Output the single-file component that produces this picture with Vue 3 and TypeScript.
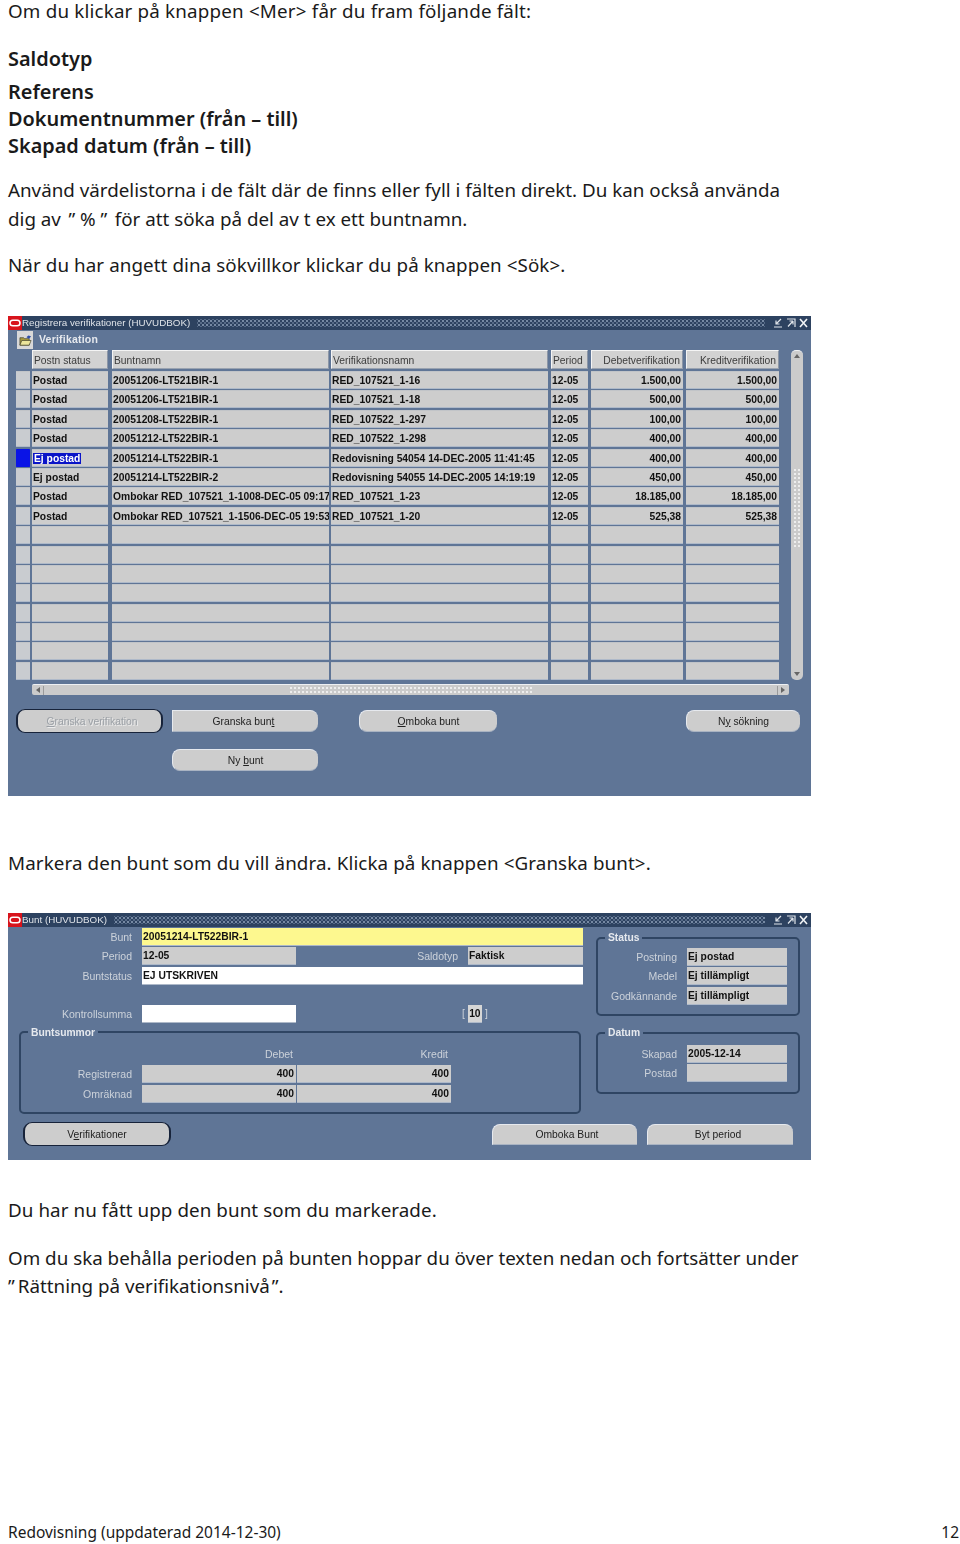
<script setup lang="ts">
type Row = {
  status: string
  batch: string
  name: string
  period: string
  debit: string
  credit: string
  active?: boolean
}

const rows: Row[] = [
  { status: 'Postad', batch: '20051206-LT521BIR-1', name: 'RED_107521_1-16', period: '12-05', debit: '1.500,00', credit: '1.500,00' },
  { status: 'Postad', batch: '20051206-LT521BIR-1', name: 'RED_107521_1-18', period: '12-05', debit: '500,00', credit: '500,00' },
  { status: 'Postad', batch: '20051208-LT522BIR-1', name: 'RED_107522_1-297', period: '12-05', debit: '100,00', credit: '100,00' },
  { status: 'Postad', batch: '20051212-LT522BIR-1', name: 'RED_107522_1-298', period: '12-05', debit: '400,00', credit: '400,00' },
  { status: 'Ej postad', batch: '20051214-LT522BIR-1', name: 'Redovisning 54054 14-DEC-2005 11:41:45', period: '12-05', debit: '400,00', credit: '400,00', active: true },
  { status: 'Ej postad', batch: '20051214-LT522BIR-2', name: 'Redovisning 54055 14-DEC-2005 14:19:19', period: '12-05', debit: '450,00', credit: '450,00' },
  { status: 'Postad', batch: 'Ombokar RED_107521_1-1008-DEC-05 09:17', name: 'RED_107521_1-23', period: '12-05', debit: '18.185,00', credit: '18.185,00' },
  { status: 'Postad', batch: 'Ombokar RED_107521_1-1506-DEC-05 19:53', name: 'RED_107521_1-20', period: '12-05', debit: '525,38', credit: '525,38' },
]
const emptyRows = 8
</script>

<template>
  <main class="page">
    <p class="line first">Om du klickar på knappen &lt;Mer&gt; får du fram följande fält:</p>
    <p class="line strong mt-saldo">Saldotyp</p>
    <p class="line strong mt-ref">Referens</p>
    <p class="line strong">Dokumentnummer (från – till)</p>
    <p class="line strong">Skapad datum (från – till)</p>
    <p class="line mt-use">Använd värdelistorna i de fält där de finns eller fyll i fälten direkt. Du kan också använda</p>
    <p class="line mt-dig">dig av <span class="q">” % ”</span> för att söka på del av t ex ett buntnamn.</p>
    <p class="line mt-when">När du har angett dina sökvillkor klickar du på knappen &lt;Sök&gt;.</p>

    <section class="window win-list">
      <header class="titlebar">
        <svg class="logo" viewBox="0 0 14 14"><rect width="14" height="14" fill="#d8141c" /><rect x="2" y="4.2" width="10" height="5.6" rx="2.8" fill="none" stroke="#fff" stroke-width="1.5" /></svg>
        <span class="title">Registrera verifikationer (HUVUDBOK)</span>
        <span class="dots"></span>
        <svg class="winbtns" viewBox="0 0 38 14"><path d="M3 11h8M10 3L5 8M5 4.500V8h3.500" fill="none" stroke="#dfe4ea" stroke-width="1.2" /><path d="M16 3h8v8M22 5l-5 5.500M22 5h-3.500M22 5v3.500" fill="none" stroke="#dfe4ea" stroke-width="1.2" /><path d="M29 3l7 8M36 3l-7 8" fill="none" stroke="#f2f4f6" stroke-width="1.6" /></svg>
      </header>

      <div class="toolbar">
        <span class="folder">
          <svg viewBox="0 0 14 14" width="13" height="13"><path d="M1 4h4l1 1h5v7H1z" fill="#a89a3c" stroke="#3a3a2a" stroke-width=".7" /><path d="M3 7h10l-2 5H1z" fill="#ece59a" stroke="#3a3a2a" stroke-width=".7" /><path d="M8 3.500l2-2 3 1-2 2.500z" fill="#2f4fa8" /></svg>
        </span>
        <span class="block-title">Verifikation</span>
      </div>

      <div class="table-wrap">
        <div class="table">
          <div class="trow head">
            <span class="cell sel blank"></span>
            <span class="cell c1">Postn status</span>
            <span class="cell c2">Buntnamn</span>
            <span class="cell c3">Verifikationsnamn</span>
            <span class="cell c4">Period</span>
            <span class="cell c5 num">Debetverifikation</span>
            <span class="cell c6 num">Kreditverifikation</span>
          </div>
          <div v-for="r in rows" :key="r.name" class="trow">
            <span class="cell sel" :class="{ on: r.active }"></span>
            <span class="cell c1"><span :class="{ picked: r.active }">{{ r.status }}</span></span>
            <span class="cell c2">{{ r.batch }}</span>
            <span class="cell c3">{{ r.name }}</span>
            <span class="cell c4">{{ r.period }}</span>
            <span class="cell c5 num">{{ r.debit }}</span>
            <span class="cell c6 num">{{ r.credit }}</span>
          </div>
          <div v-for="n in emptyRows" :key="n" class="trow">
            <span class="cell sel"></span>
            <span class="cell c1"></span>
            <span class="cell c2"></span>
            <span class="cell c3"></span>
            <span class="cell c4"></span>
            <span class="cell c5"></span>
            <span class="cell c6"></span>
          </div>
        </div>
        <div class="vscroll">
          <span class="arrow up"></span>
          <span class="grip-v"></span>
          <span class="arrow down"></span>
        </div>
      </div>

      <div class="hscroll">
        <span class="arrow left"></span>
        <span class="notch"></span>
        <span class="grip-h"></span>
        <span class="notch"></span>
        <span class="arrow right"></span>
      </div>

      <div class="btn-row one">
        <button class="btn default disabled b-verif"><u>G</u>ranska verifikation</button>
        <button class="btn square-left b-bunt">Granska bun<u>t</u></button>
        <button class="btn b-omboka"><u>O</u>mboka bunt</button>
        <button class="btn b-sok">N<u>y</u> sökning</button>
      </div>
      <div class="btn-row two">
        <button class="btn b-ny">Ny <u>b</u>unt</button>
      </div>
    </section>

    <p class="line mt-mark">Markera den bunt som du vill ändra. Klicka på knappen &lt;Granska bunt&gt;.</p>

    <section class="window win-batch">
      <header class="titlebar">
        <svg class="logo" viewBox="0 0 14 14"><rect width="14" height="14" fill="#d8141c" /><rect x="2" y="4.2" width="10" height="5.6" rx="2.8" fill="none" stroke="#fff" stroke-width="1.5" /></svg>
        <span class="title">Bunt (HUVUDBOK)</span>
        <span class="dots"></span>
        <svg class="winbtns" viewBox="0 0 38 14"><path d="M3 11h8M10 3L5 8M5 4.500V8h3.500" fill="none" stroke="#dfe4ea" stroke-width="1.2" /><path d="M16 3h8v8M22 5l-5 5.500M22 5h-3.500M22 5v3.500" fill="none" stroke="#dfe4ea" stroke-width="1.2" /><path d="M29 3l7 8M36 3l-7 8" fill="none" stroke="#f2f4f6" stroke-width="1.6" /></svg>
      </header>

      <div class="form">
        <div class="form-left">
          <div class="frow">
            <label class="flabel">Bunt</label>
            <span class="field yellow w441">20051214-LT522BIR-1</span>
          </div>
          <div class="frow">
            <label class="flabel">Period</label>
            <span class="field w154">12-05</span>
            <label class="flabel saldo">Saldotyp</label>
            <span class="field w115">Faktisk</span>
          </div>
          <div class="frow">
            <label class="flabel">Buntstatus</label>
            <span class="field white w441">EJ UTSKRIVEN</span>
          </div>
          <div class="frow spaced">
            <label class="flabel">Kontrollsumma</label>
            <span class="field white w154"></span>
            <span class="bracket open">[</span>
            <span class="field mini">10</span>
            <span class="bracket">]</span>
          </div>

          <fieldset class="group sums">
            <legend>Buntsummor</legend>
            <div class="frow captions">
              <span class="cap debit">Debet</span>
              <span class="cap credit">Kredit</span>
            </div>
            <div class="frow">
              <label class="flabel inner">Registrerad</label>
              <span class="field w154 num">400</span>
              <span class="field w154 num tight">400</span>
            </div>
            <div class="frow">
              <label class="flabel inner">Omräknad</label>
              <span class="field w154 num">400</span>
              <span class="field w154 num tight">400</span>
            </div>
          </fieldset>
        </div>

        <div class="form-right">
          <fieldset class="group status">
            <legend>Status</legend>
            <div class="frow">
              <label class="flabel side">Postning</label>
              <span class="field w100">Ej postad</span>
            </div>
            <div class="frow">
              <label class="flabel side">Medel</label>
              <span class="field w100">Ej tillämpligt</span>
            </div>
            <div class="frow">
              <label class="flabel side">Godkännande</label>
              <span class="field w100">Ej tillämpligt</span>
            </div>
          </fieldset>
          <fieldset class="group dates">
            <legend>Datum</legend>
            <div class="frow">
              <label class="flabel side">Skapad</label>
              <span class="field w100">2005-12-14</span>
            </div>
            <div class="frow">
              <label class="flabel side">Postad</label>
              <span class="field w100"></span>
            </div>
          </fieldset>
        </div>
      </div>

      <div class="btn-row three">
        <button class="btn default b-ver">V<u>e</u>rifikationer</button>
        <button class="btn cut b-omb">Omboka Bunt</button>
        <button class="btn cut b-byt">Byt period</button>
      </div>
    </section>

    <p class="line mt-now">Du har nu fått upp den bunt som du markerade.</p>
    <p class="line mt-keep">Om du ska behålla perioden på bunten hoppar du över texten nedan och fortsätter under</p>
    <p class="line"><span class="q-open">”</span>Rättning på verifikationsnivå<span class="q-close">”</span>.</p>

    <footer class="foot">
      <span>Redovisning (uppdaterad 2014-12-30)</span>
      <span>12</span>
    </footer>
  </main>
</template>

<style>
html,
body {
  background: #fff;
}
</style>

<style scoped>
.page {
  position: relative;
  width: 960px;
  height: 1544px;
  padding-left: 8px;
  box-sizing: border-box;
  overflow: hidden;
  font-family: "Noto Sans", "Open Sans", sans-serif;
  color: #1a1a1a;
}

.line {
  margin: 0;
  font-size: 18.8px;
  line-height: 28px;
  white-space: nowrap;
}

.strong {
  font-size: 19.9px;
  font-weight: 600;
  line-height: 27px;
}

.q { padding: 0 2.6px; }
.q-open { margin-right: 3px; }
.q-close { margin-left: 2px; }

.first { line-height: 22px; letter-spacing: 0.18px; }
.mt-saldo { margin-top: 23px; }
.mt-ref { margin-top: 6px; }
.mt-use { margin-top: 17px; }
.mt-dig { margin-top: 1px; }
.mt-when { margin-top: 18px; letter-spacing: 0.08px; }
.mt-mark { margin-top: 53px; letter-spacing: 0.1px; }
.mt-now { margin-top: 36px; letter-spacing: 0.07px; }
.mt-keep { margin-top: 20px; }

.window {
  width: 803px;
  background: #5f7596;
  font-family: "Liberation Sans", Arial, sans-serif;
  font-size: 10.3px;
  color: #111;
  overflow: hidden;
  filter: blur(0.3px);
}

.win-list {
  height: 480px;
  margin-top: 37px;
}

.win-batch {
  height: 247px;
  margin-top: 36px;
}

.titlebar {
  display: flex;
  align-items: center;
  height: 14px;
  background: #2d4260;
  color: #dfe3e8;
}

.logo {
  width: 14px;
  height: 14px;
  flex: none;
}

.title {
  margin-bottom: 2px;
  font-size: 9.8px;
  white-space: nowrap;
}

.dots {
  flex: 1;
  height: 8px;
  margin: 0 6px 0 7px;
  background-image:
    radial-gradient(circle, #7689a3 0.8px, transparent 1px),
    radial-gradient(circle, #566a87 0.8px, transparent 1px);
  background-size: 4px 4px;
  background-position: 0 0, 2px 2px;
}

.winbtns {
  width: 38px;
  height: 14px;
  flex: none;
  margin-right: 2px;
}

.toolbar {
  display: flex;
  align-items: center;
  height: 20px;
  padding-left: 9px;
}

.folder {
  display: flex;
  align-items: center;
  justify-content: center;
  width: 16px;
  height: 18px;
  background: #d8d8d8;
}

.block-title {
  margin: 0 0 3px 6px;
  font-size: 10.5px;
  font-weight: 700;
  color: #e6e9ee;
  letter-spacing: 0.2px;
}

.table-wrap {
  display: flex;
  padding-left: 8px;
}

.table {
  width: 775px;
}

.trow {
  display: flex;
  height: 18px;
  margin-bottom: 1.4px;
  font-weight: 700;
}

.trow.head {
  height: 19px;
  margin-bottom: 2px;
  font-weight: 400;
  color: #3c3c3c;
}

.cell {
  display: block;
  box-sizing: border-box;
  flex: none;
  height: 100%;
  margin-right: 3px;
  padding: 0 1px;
  line-height: 17px;
  background: #cdcdcd;
  border-top: 1px solid #c1c4c8;
  border-bottom: 1px solid #aeb9c9;
  white-space: nowrap;
  overflow: hidden;
}

.head .cell {
  line-height: 19px;
  background: #d2d2d2;
  border-top: 1px solid #f4f4f4;
  border-left: 1px solid #f4f4f4;
  border-bottom: 1px solid #9aa3b0;
  border-right: 1px solid #8c96a6;
}

.head .cell.blank {
  background: transparent;
  border-color: transparent;
}

.sel { width: 14px; margin-right: 2px; background: #c9ccd0; }
.sel.on { background: #0a14e6; border-color: #0a14e6; border-radius: 1px; }
.c1 { width: 76px; margin-right: 4px; }
.c2 { width: 217px; margin-right: 2px; }
.c3 { width: 217px; }
.c4 { width: 37px; }
.c5 { width: 92px; }
.c6 { width: 93px; margin-right: 0; }

.num {
  padding-right: 2px;
  text-align: right;
}

.picked {
  padding: 0 1px;
  background: #0a14c8;
  color: #fff;
}

.vscroll {
  display: flex;
  flex-direction: column;
  align-items: center;
  box-sizing: border-box;
  width: 12px;
  height: 330px;
  background: #cbcbcb;
  border-radius: 5px;
  border-top: 1px solid #eef0f3;
}

.grip-v {
  width: 8px;
  height: 80px;
  margin-top: 110px;
  background-image: radial-gradient(circle, #eee 0.9px, transparent 1.1px);
  background-size: 4px 4px;
}

.hscroll {
  display: flex;
  align-items: center;
  box-sizing: border-box;
  width: 757px;
  height: 11px;
  margin: 3px 0 0 24px;
  background: #cbcbcb;
  border-top: 1px solid #eef0f3;
  border-radius: 2px;
}

.grip-h {
  width: 244px;
  height: 8px;
  margin: 0 auto;
  background-image: radial-gradient(circle, #eee 0.9px, transparent 1.1px);
  background-size: 4px 4px;
}

.notch {
  width: 1px;
  height: 9px;
  background: #9a9a9a;
}

.arrow {
  flex: none;
  width: 0;
  height: 0;
  border: 3px solid transparent;
}

.arrow.up { border-bottom: 4px solid #666; border-top: 0; margin-top: 3px; }
.arrow.down { border-top: 4px solid #666; border-bottom: 0; margin: auto 0 4px; }
.arrow.left { border-right: 4px solid #666; border-left: 0; margin: 0 3px 0 4px; }
.arrow.right { border-left: 4px solid #666; border-right: 0; margin: 0 4px 0 3px; }

.btn-row {
  display: flex;
  align-items: center;
}

.one {
  height: 24px;
  margin-top: 14px;
  padding-left: 8px;
}

.two {
  margin-top: 16px;
  padding-left: 164px;
}

.three {
  height: 24px;
  margin-top: 9px;
  padding-left: 15px;
}

.btn {
  display: block;
  box-sizing: border-box;
  height: 22px;
  margin: 0;
  padding: 0;
  font: inherit;
  color: #222;
  background: #cdcdcd;
  border: 0;
  border-top: 1px solid #e6e9ee;
  border-left: 1px solid #e6e9ee;
  border-bottom: 1px solid #a9b3c2;
  border-radius: 8px;
}

.btn u {
  text-decoration-thickness: 1px;
}

.default {
  height: 24px;
  border: 1px solid #17233a;
  border-left-width: 2px;
  border-right-width: 2px;
  border-radius: 9px;
}

.disabled {
  color: #9ba0a6;
  text-shadow: 1px 1px 0 #ececec;
}

.square-left { border-radius: 0 8px 8px 0; }
.cut { border-radius: 8px 8px 0 0; height: 21px; }

.b-verif { width: 147px; margin-right: 9px; padding-left: 5px; }
.b-bunt { width: 146px; margin-right: 41px; padding-right: 4px; }
.b-omboka { width: 138px; margin-right: 189px; }
.b-sok { width: 114px; }
.b-ny { width: 146px; }
.b-ver { width: 148px; margin-right: 321px; }
.b-omb { width: 145px; margin-right: 10px; padding-left: 4px; }
.b-byt { width: 146px; padding-right: 5px; }

.form {
  display: flex;
  height: 186px;
  padding-top: 1px;
  box-sizing: border-box;
}

.form-left {
  width: 588px;
  flex: none;
}

.form-right {
  width: 204px;
  flex: none;
}

.frow {
  display: flex;
  height: 18px;
  margin-bottom: 1.4px;
}

.frow.spaced {
  margin-top: 20px;
}

.flabel {
  flex: none;
  width: 124px;
  margin-right: 10px;
  font-size: 10.5px;
  line-height: 18px;
  text-align: right;
  color: #ccd2da;
  white-space: nowrap;
}

.flabel.saldo {
  width: 162px;
}

.flabel.inner {
  width: 111px;
}

.flabel.side {
  width: 79px;
}

.field {
  display: block;
  flex: none;
  box-sizing: border-box;
  height: 18px;
  padding: 0 1px;
  line-height: 17px;
  font-weight: 700;
  background: #cdcdcd;
  border-bottom: 1px solid #aeb9c9;
  white-space: nowrap;
  overflow: hidden;
}

.yellow { background: #fdf88f; }
.white { background: #fff; }
.w441 { width: 441px; }
.w154 { width: 154px; }
.w115 { width: 115px; }
.w100 { width: 100px; }
.tight { margin-left: 1px; }
.field.num { padding-right: 2px; text-align: right; }

.bracket {
  line-height: 18px;
  color: #ccd2da;
}

.bracket.open {
  margin-left: 166px;
}

.mini {
  width: 14px;
  margin: 0 3px;
  text-align: center;
  background: #d6d6d6;
}

.group {
  box-sizing: border-box;
  min-width: 0;
  margin: 0;
  padding: 0;
  border: 2px solid #2f4563;
  border-radius: 5px;
}

.group legend {
  margin-left: 7px;
  padding: 0 3px;
  font-weight: 700;
  line-height: 13px;
  color: #e6e9ee;
}

.sums {
  width: 562px;
  height: 88px;
  margin: 3px 0 0 11px;
  padding-top: 8px;
}

.captions {
  height: 14px;
  margin-bottom: 4.500px;
  font-size: 10.5px;
  line-height: 14px;
  color: #ccd2da;
}

.cap {
  display: block;
  text-align: right;
}

.cap.debit { width: 272px; }
.cap.credit { width: 155px; }

.status {
  width: 204px;
  height: 85px;
  margin-top: 3px;
  padding-top: 4px;
}

.dates {
  width: 204px;
  height: 68px;
  margin-top: 10px;
  padding-top: 6px;
}

.foot {
  position: absolute;
  left: 8px;
  right: 1px;
  top: 1518px;
  display: flex;
  justify-content: space-between;
  font-size: 15.5px;
  line-height: 28px;
}
</style>
